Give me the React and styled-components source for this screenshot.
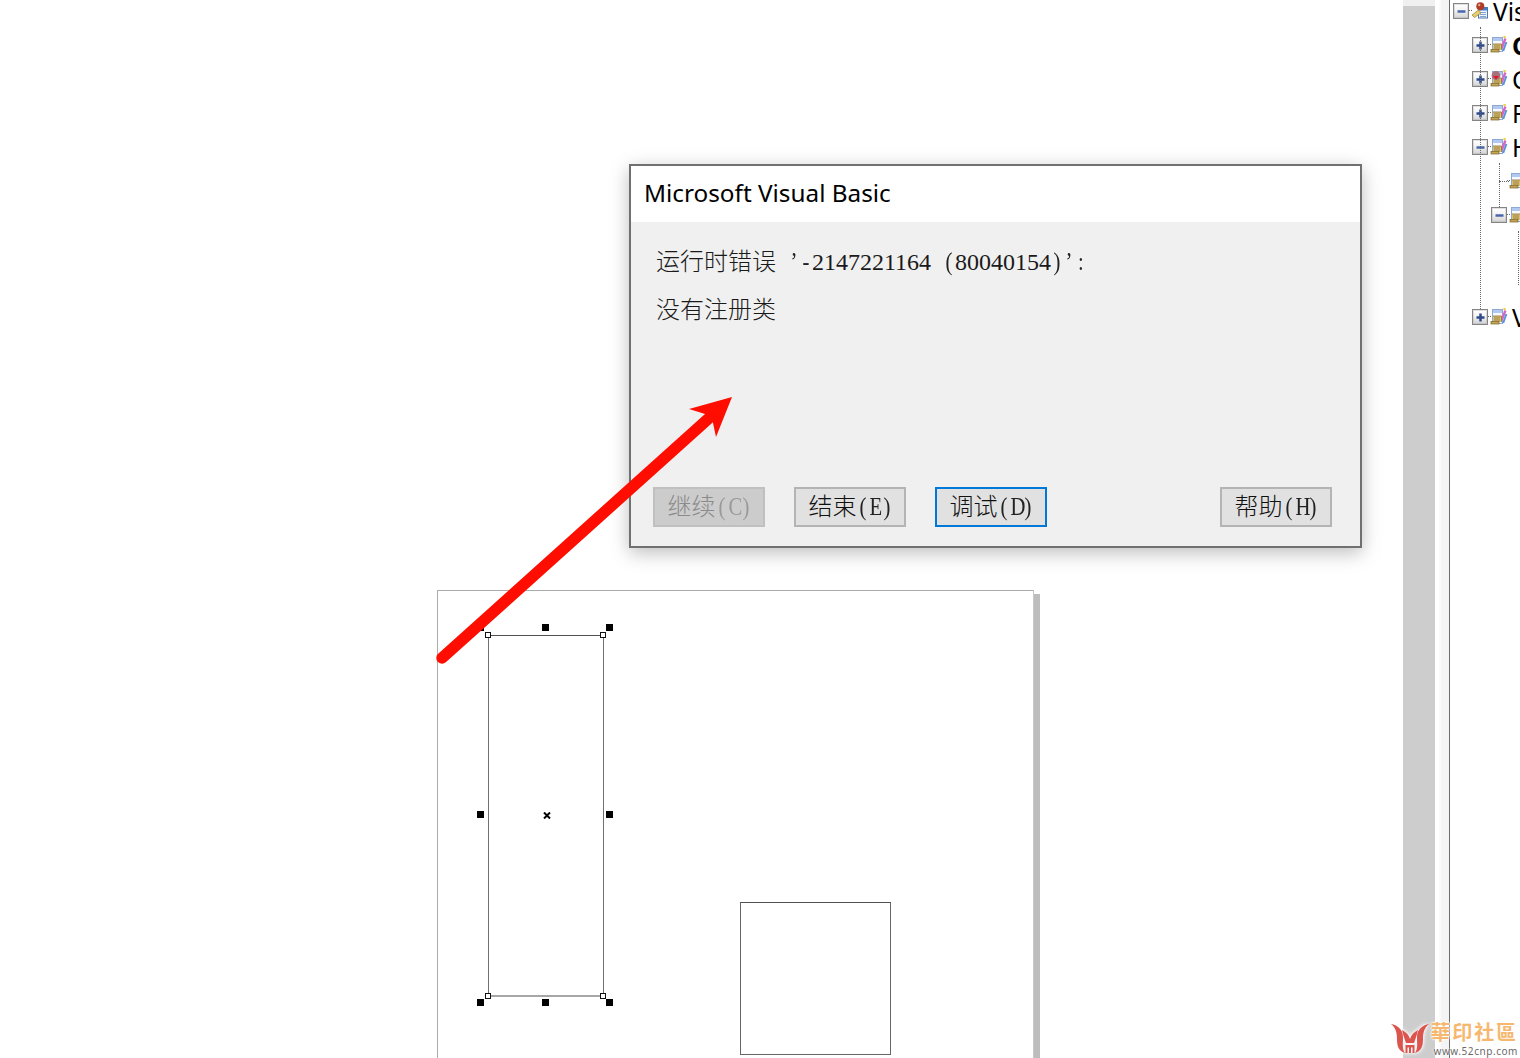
import React from "react";
import styled, { createGlobalStyle } from "styled-components";

const Global = createGlobalStyle`
  html, body { margin: 0; padding: 0; background: #fff; }
  #root { width: 1520px; height: 1058px; }
`;

const Page = styled.div`
  position: relative;
  display: flex;
  width: 1520px;
  height: 1058px;
  overflow: hidden;
  background: #fff;
`;

const Workspace = styled.main`
  position: relative;
  flex: 0 0 1403px;
  height: 100%;
`;

const ScrollTrack = styled.div`
  flex: 0 0 32px;
  display: flex;
  flex-direction: column;
  background: #cdcdcd;
`;
const ScrollCap = styled.div`
  height: 6px;
  background: #f0f0f0;
`;
const Splitter = styled.div`
  flex: 0 0 15px;
  box-sizing: border-box;
  padding-left: 4px;
  background: #fff;
  border-right: 1px solid #6c6c6c;
`;
const SplitterFace = styled.div`
  height: 100%;
  background: #f4f4f4;
  border-left: 2px solid #fbfbfb;
`;

/* ---- free canvas ---- */
const Sheet = styled.div`
  position: absolute;
  left: 437px;
  top: 590px;
  width: 597px;
  height: 600px;
  box-sizing: border-box;
  background: #fff;
  border: 1px solid #ababab;
  border-right-color: #c8c8c8;
  box-shadow: 6px 4px 0 #bdbdbd;
`;
const Shape = styled.div`
  position: absolute;
  left: ${p => p.$x}px;
  top: ${p => p.$y}px;
  width: ${p => p.$w}px;
  height: ${p => p.$h}px;
  box-sizing: border-box;
  border: 1px solid #666;
  border-top-color: #505050;
`;
const SelectedShape = styled(Shape)`
  border-bottom: 2px solid #a6a6a6;
  border-left-color: #707070;
  border-right-color: #707070;
`;
const Handle = styled.div`
  position: absolute;
  left: ${p => p.$x}px;
  top: ${p => p.$y}px;
  width: 7px;
  height: 7px;
  background: #000;
`;
const Node = styled.div`
  position: absolute;
  left: ${p => p.$x}px;
  top: ${p => p.$y}px;
  width: 6px;
  height: 6px;
  box-sizing: border-box;
  background: #fff;
  border: 1px solid #111;
`;
const CenterMark = styled.svg`
  position: absolute;
  left: 543px;
  top: 812px;
  width: 8px;
  height: 7px;
`;

/* ---- dialog ---- */
const Dialog = styled.section`
  position: absolute;
  left: 629px;
  top: 164px;
  width: 733px;
  height: 384px;
  box-sizing: border-box;
  display: flex;
  flex-direction: column;
  border: 2px solid #707070;
  background: #f0f0f0;
  box-shadow: 0 5px 18px rgba(0, 0, 0, 0.26);
`;
const TitleBar = styled.header`
  flex: 0 0 56px;
  box-sizing: border-box;
  display: flex;
  align-items: center;
  padding: 0 0 4px 13px;
  background: #fff;
  font: 400 24.3px "Noto Sans", "Open Sans", sans-serif;
  color: #000;
`;
const Body = styled.div`
  flex: 1;
  display: flex;
  flex-direction: column;
  justify-content: space-between;
  padding: 16px 28px 19px 22px;
`;
const Message = styled.div`
  padding-left: 3px;
  font: 300 24px/48px "Liberation Serif", "Noto Sans CJK SC", serif;
  color: #1a1a1a;
  white-space: nowrap;
`;
const Line = styled.div`
  height: 47.5px;
`;
const Half = styled.span`
  display: inline-block;
  width: 12px;
  text-align: center;
  font-size: 23px;
  line-height: 1;
  color: ${p => (p.$muted ? "#9a9a9a" : "#222")};
  transform: scale(0.9, 1.05);
`;
const ButtonRow = styled.div`
  display: flex;
  gap: 29px;
`;
const Button = styled.button`
  width: 112px;
  height: 40px;
  box-sizing: border-box;
  padding: 0 0 0 1px;
  display: flex;
  align-items: center;
  justify-content: center;
  margin-left: ${p => (p.$push ? "auto" : "0")};
  background: ${p => (p.disabled ? "#cccccc" : "#e1e1e1")};
  border: ${p => (p.$focus ? "2px solid #0078d7" : p.disabled ? "2px solid #c0c0c0" : "2px solid #b4b4b4")};
  font: 300 24px/1 "Liberation Serif", "Noto Sans CJK SC", serif;
  color: ${p => (p.disabled ? "#8a8a8a" : "#111")};
`;

const ArrowSvg = styled.svg`
  position: absolute;
  left: 430px;
  top: 390px;
  width: 310px;
  height: 280px;
  pointer-events: none;
`;

/* ---- tree ---- */
const Tree = styled.nav`
  position: relative;
  flex: 1;
  min-width: 0;
  margin-top: -6px;
  overflow: hidden;
`;
const Row = styled.div`
  display: flex;
  align-items: center;
  height: 34px;
  padding-left: ${p => 3 + p.$level * 19}px;
  white-space: nowrap;
`;
const Expander = styled.span`
  flex: 0 0 16px;
  width: 16px;
  height: 16px;
  box-sizing: border-box;
  display: flex;
  align-items: center;
  justify-content: center;
  border: 1px solid #858585;
  box-shadow: inset 0 0 0 1px rgba(170, 170, 170, 0.35);
  background: linear-gradient(#ffffff, #f3f3f3 45%, #d2d2d2);
`;
const NoExpander = styled.span`
  flex: 0 0 16px;
  position: relative;
  height: 16px;
`;
const Connector = styled.span`
  flex: 0 0 3px;
  width: 3px;
  height: 1px;
  border-top: 1px dotted #666;
`;
const LongConnector = styled.span`
  position: absolute;
  left: 8px;
  top: 8px;
  width: 10px;
  border-top: 1px dotted #666;
`;
const Glyph = styled.svg`
  flex: 0 0 16px;
  width: 16px;
  height: 16px;
  overflow: visible;
`;
const Label = styled.span`
  margin-left: 5px;
  font: ${p => (p.$bold ? 700 : 400)} 24.6px "Noto Sans", sans-serif;
  color: #000;
`;
const Guide = styled.span`
  position: absolute;
  left: ${p => p.$x}px;
  top: ${p => p.$y}px;
  height: ${p => p.$h}px;
  border-left: 1px dotted #666;
`;

/* ---- watermark ---- */
const Watermark = styled.div`
  position: absolute;
  right: 2px;
  bottom: 1px;
  display: flex;
  align-items: flex-end;
  gap: 1px;
`;
const LogoSvg = styled.svg`
  width: 38px;
  height: 32px;
  margin-bottom: 3px;
  filter: drop-shadow(0 0 1px #fff) drop-shadow(0 0 2px #fff);
`;
const MarkText = styled.div`
  display: flex;
  flex-direction: column;
  align-items: flex-end;
`;
const MarkName = styled.div`
  font: 700 20px/23px "Noto Sans CJK TC", sans-serif;
  letter-spacing: 1.9px;
  margin-bottom: 2px;
  color: #f6b870;
  text-shadow: 0 0 2px #fff, 0 0 2px #fff, 0 0 3px #fff;
`;
const MarkUrl = styled.div`
  font: 400 10px/12px "Noto Sans", sans-serif;
  letter-spacing: 0.55px;
  color: #6a6a6a;
  text-shadow: 0 0 2px #fff, 0 0 2px #fff;
`;

const Sign = ({ plus }) => (
  <svg width="9" height="9" viewBox="0 0 9 9">
    <rect x="0.5" y="3.25" width="8" height="2.5" fill={plus ? "#2f4a8c" : "#4a66ac"} />
    {plus && <rect x="3.25" y="0.5" width="2.5" height="8" fill="#2f4a8c" />}
  </svg>
);

const RootIcon = () => (
  <Glyph viewBox="0 0 16 16">
    <rect x="6.5" y="4.5" width="9" height="10.5" fill="#eef4fc" stroke="#4f76ad" />
    <rect x="7" y="5" width="8" height="2.5" fill="#3f7fd0" />
    <path d="M8 9.5h6M8 11.5h6M8 13.5h6" stroke="#7fa4d4" />
    <circle cx="8.3" cy="3.2" r="4" fill="#b03c28" />
    <circle cx="7.2" cy="2" r="1.2" fill="#e8a58a" />
    <path d="M0 12 L6.5 7 L9 10 L2.5 14.5 Z" fill="#e6cd6e" stroke="#97803a" strokeWidth="0.7" />
  </Glyph>
);

const ScrollIcon = ({ error }) => (
  <Glyph viewBox="0 0 16 16">
    <rect x="1.5" y="0.5" width="10" height="14" fill="#f7f9fd" stroke="#8ea8d6" />
    <rect x="2" y="1" width="9" height="3" fill="#b2c8ef" />
    <path d="M14.4 1.5 L10.8 11" stroke="#d766c4" strokeWidth="2.4" />
    <path d="M15.4 5 L12.2 14" stroke="#5b93d6" strokeWidth="2" />
    <rect x="12.4" y="-1" width="2.4" height="2.2" fill="#ecd24a" />
    <rect x="2" y="7" width="8.5" height="6" fill="#dcc276" />
    <path d="M2 7 H10.5 V13 M3 9 H9 M3 11 H9" stroke="#8b7030" strokeWidth="0.8" fill="none" />
    <rect x="0" y="12.5" width="8" height="2.5" fill="#c4a555" stroke="#7a6326" strokeWidth="0.7" />
    {error && <circle cx="5" cy="4.5" r="4.4" fill="#a8707a" />}
    {error && <path d="M2 5 H8 L5 8.5 Z" fill="#e0162a" />}
  </Glyph>
);

export default function App() {
  return (
    <Page>
      <Global />
      <Workspace>
        <Sheet />
        <SelectedShape $x={488} $y={635} $w={116} $h={362} />
        <Shape $x={740} $y={902} $w={151} $h={153} />
        <Node $x={485} $y={632} />
        <Node $x={600} $y={632} />
        <Node $x={485} $y={993} />
        <Node $x={600} $y={993} />
        <Handle $x={477} $y={624} />
        <Handle $x={542} $y={624} />
        <Handle $x={606} $y={624} />
        <Handle $x={477} $y={811} />
        <Handle $x={606} $y={811} />
        <Handle $x={477} $y={999} />
        <Handle $x={542} $y={999} />
        <Handle $x={606} $y={999} />
        <CenterMark viewBox="0 0 8 7">
          <path d="M1 0.5 L7 6.5 M7 0.5 L1 6.5" stroke="#000" strokeWidth="2" />
        </CenterMark>

        <Dialog>
          <TitleBar>Microsoft Visual Basic</TitleBar>
          <Body>
            <Message>
              <Line>
                运行时错误<Half> </Half><Half>’</Half><Half>-</Half>2147221164<Half> </Half>
                <Half>(</Half>80040154<Half>)</Half><Half>’</Half><Half>:</Half>
              </Line>
              <Line>没有注册类</Line>
            </Message>
            <ButtonRow>
              <Button disabled>继续<Half $muted>(</Half><Half $muted>C</Half><Half $muted>)</Half></Button>
              <Button>结束<Half>(</Half><Half>E</Half><Half>)</Half></Button>
              <Button $focus>调试<Half>(</Half><Half>D</Half><Half>)</Half></Button>
              <Button $push>帮助<Half>(</Half><Half>H</Half><Half>)</Half></Button>
            </ButtonRow>
          </Body>
        </Dialog>

        <ArrowSvg viewBox="430 390 310 280">
          <path d="M442 658 L708 419" stroke="#ff0d00" strokeWidth="11.5" strokeLinecap="round" fill="none" />
          <path d="M732 397 L689 409 L705 414 L713 423 L716 437 Z" fill="#ff0d00" />
        </ArrowSvg>
      </Workspace>

      <ScrollTrack>
        <ScrollCap />
      </ScrollTrack>
      <Splitter>
        <SplitterFace />
      </Splitter>

      <Tree>
        <Guide $x={30} $y={33} $h={282} />
        <Guide $x={49} $y={169} $h={44} />
        <Guide $x={68} $y={237} $h={54} />
        <Row $level={0}>
          <Expander><Sign /></Expander><Connector /><RootIcon /><Label>Visual Basic</Label>
        </Row>
        <Row $level={1}>
          <Expander><Sign plus /></Expander><Connector /><ScrollIcon /><Label $bold>Class</Label>
        </Row>
        <Row $level={1}>
          <Expander><Sign plus /></Expander><Connector /><ScrollIcon error /><Label>Corel</Label>
        </Row>
        <Row $level={1}>
          <Expander><Sign plus /></Expander><Connector /><ScrollIcon /><Label>Form</Label>
        </Row>
        <Row $level={1}>
          <Expander><Sign /></Expander><Connector /><ScrollIcon /><Label>Host</Label>
        </Row>
        <Row $level={2}>
          <NoExpander><LongConnector /></NoExpander><Connector /><ScrollIcon />
        </Row>
        <Row $level={2}>
          <Expander><Sign /></Expander><Connector /><ScrollIcon />
        </Row>
        <Row $level={3} />
        <Row $level={3} />
        <Row $level={1}>
          <Expander><Sign plus /></Expander><Connector /><ScrollIcon /><Label>VBA</Label>
        </Row>
      </Tree>

      <Watermark>
        <LogoSvg viewBox="0 0 38 32">
          <path d="M0 2 C6 3 12 7 12 15 C12 22 11 27 14 31 C7 29 6 23 6 17 C6 11 5 6 0 2 Z" fill="#dc544e" />
          <path d="M38 2 C32 3 26 7 26 15 C26 22 27 27 24 31 C31 29 32 23 32 17 C32 11 33 6 38 2 Z" fill="#dc544e" />
          <path d="M11 8 C15 10 18 13 19 17 C20 13 23 10 27 8 C26 13 24 18 23 21 H15 C14 18 12 13 11 8 Z" fill="#dc544e" />
          <path d="M14.5 23 H23.5 V31 H21.5 V25.5 H20 V31 H18 V25.5 H16.5 V31 H14.5 Z" fill="#dc544e" />
        </LogoSvg>
        <MarkText>
          <MarkName>華印社區</MarkName>
          <MarkUrl>www.52cnp.com</MarkUrl>
        </MarkText>
      </Watermark>
    </Page>
  );
}
